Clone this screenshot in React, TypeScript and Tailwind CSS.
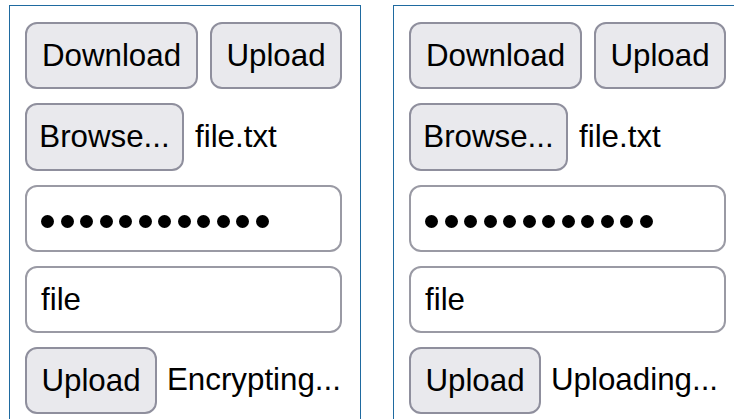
import React from "react";

const btn =
  "h-[67px] shrink-0 rounded-[12px] border-2 border-[#8f8f9d] bg-[#e9e9ed] text-black leading-none flex items-center justify-center";

function MaskDots({ count }: { count: number }) {
  return (
    <div className="flex items-center gap-[6.5px] pt-[5px]">
      {Array.from({ length: count }).map((_, i) => (
        <span key={i} className="block h-[13px] w-[13px] rounded-full bg-black" />
      ))}
    </div>
  );
}

function Panel({ status }: { status: string }) {
  return (
    <div className="h-[414px] w-[352px] shrink-0 border border-b-0 border-[#1f6aa0] pl-[15px] pt-[16px]">
      <div className="flex flex-col gap-[14px]">
        <div className="flex items-center gap-[12px]">
          <button className={`${btn} w-[173px]`}>Download</button>
          <button className={`${btn} w-[132px]`}>Upload</button>
        </div>
        <div className="flex items-center gap-[11px]">
          <button className={`${btn} w-[159px] h-[68px]`}>Browse...</button>
          <span>file.txt</span>
        </div>
        <div className="flex h-[67px] w-[317px] items-center rounded-[12px] border-2 border-[#9a9aa4] bg-white pl-[14px]">
          <MaskDots count={12} />
        </div>
        <div className="flex h-[67px] w-[317px] items-center rounded-[12px] border-2 border-[#9a9aa4] bg-white pl-[14px] leading-none">
          file
        </div>
        <div className="flex items-center gap-[10px]">
          <button className={`${btn} w-[132px]`}>Upload</button>
          <span>{status}</span>
        </div>
      </div>
    </div>
  );
}

export default function App() {
  return (
    <div
      className="flex h-[419px] w-[734px] gap-[32px] overflow-hidden bg-white pl-[9px] pt-[5px] text-[31.3px] text-black"
      style={{ fontFamily: '"Liberation Sans", Arial, sans-serif' }}
    >
      <Panel status="Encrypting..." />
      <Panel status="Uploading..." />
    </div>
  );
}
